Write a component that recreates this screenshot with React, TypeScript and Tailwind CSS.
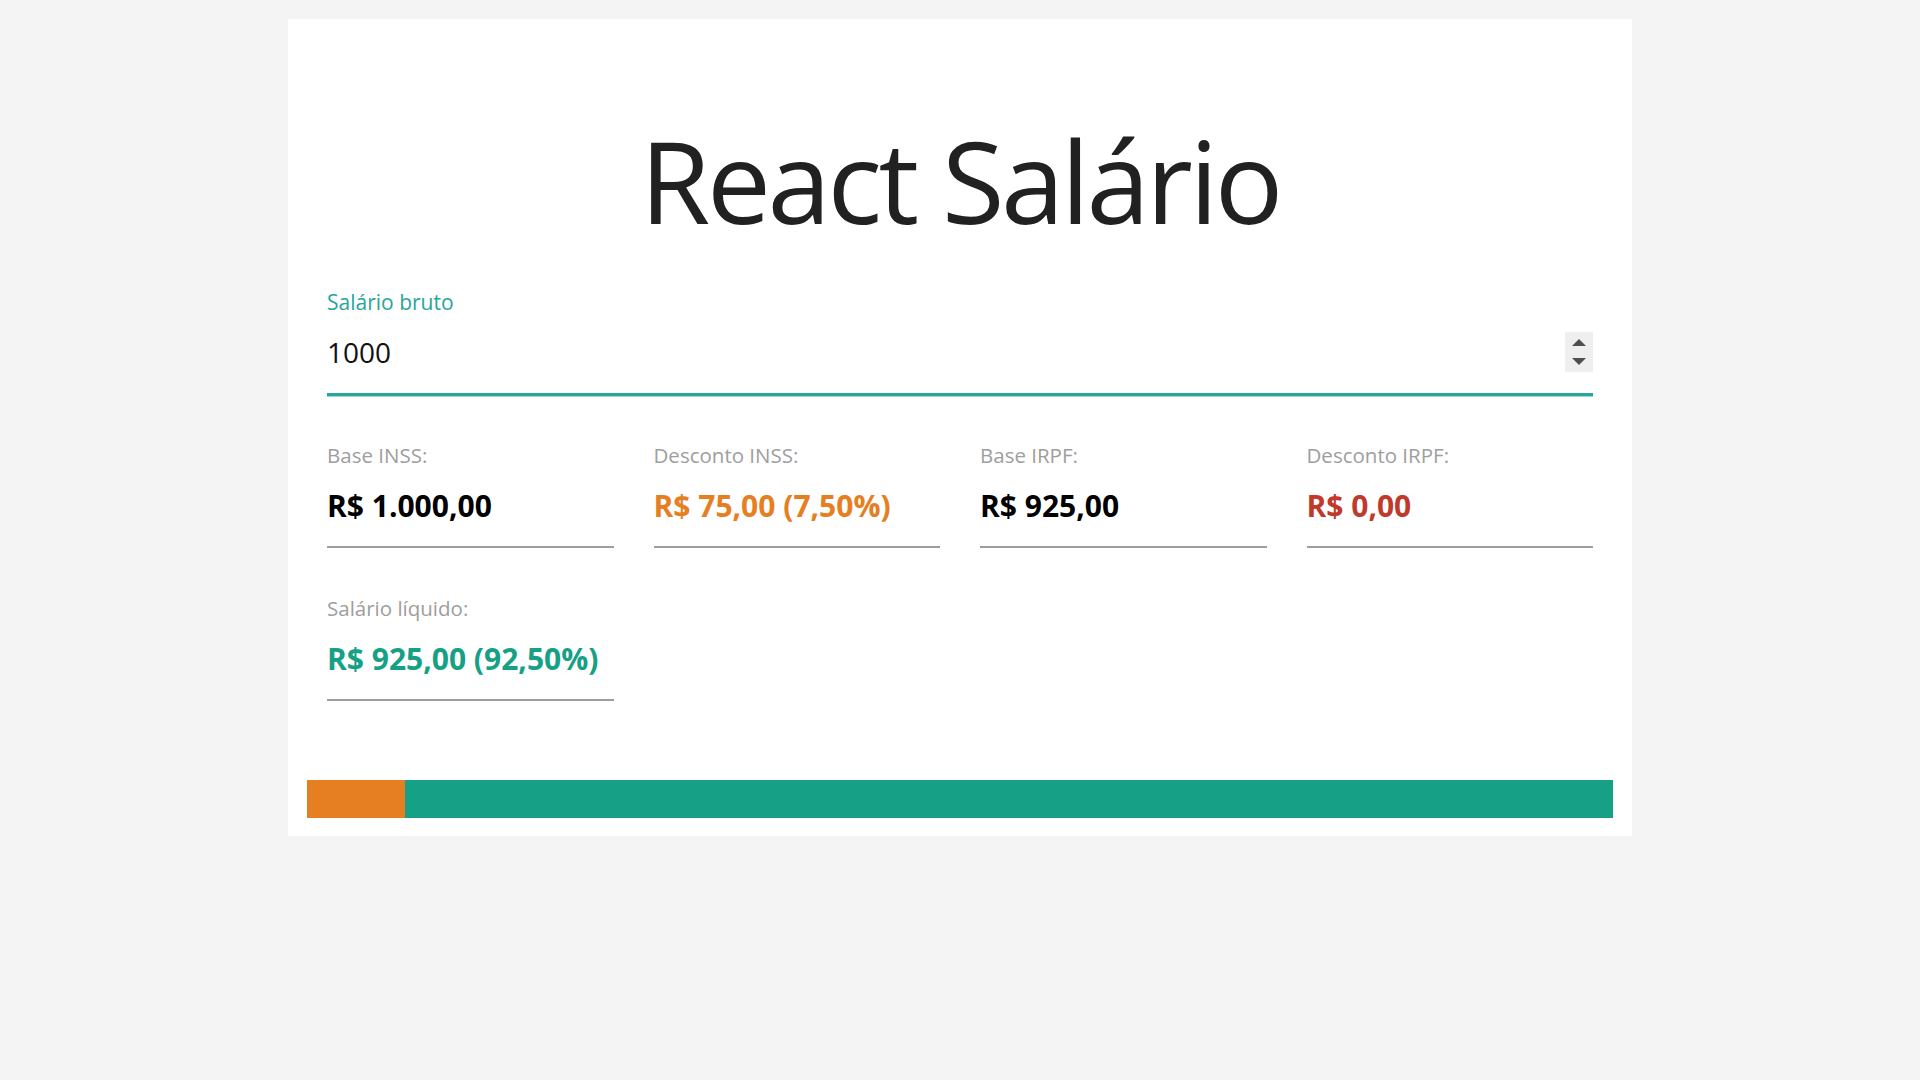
const font = { fontFamily: '"Open Sans", "Noto Sans", sans-serif' };

type FieldProps = {
  label: string;
  value: string;
  color: string;
};

const Field = ({ label, value, color }: FieldProps) => {
  return (
    <div className="flex flex-col border-b-2 border-[#9e9e9e] pb-[22px]">
      <span className="text-[20.5px] leading-[28px] text-[#9e9e9e]">{label}</span>
      <span className={`mt-[19px] text-[30px] leading-[36px] font-bold ${color}`}>{value}</span>
    </div>
  );
};

const Spinner = () => {
  return (
    <div className="flex h-[40px] w-[28px] flex-col items-center justify-between bg-[#efefef] py-[7px]">
      <svg width="14" height="7" viewBox="0 0 14 7">
        <polygon points="7,0 14,7 0,7" fill="#505050" />
      </svg>
      <svg width="14" height="7" viewBox="0 0 14 7">
        <polygon points="0,0 14,0 7,7" fill="#505050" />
      </svg>
    </div>
  );
};

export default function App() {
  const bruto = 1000;
  const inss = 75;
  const pctInss = (inss / bruto) * 100;

  return (
    <div className="min-h-screen bg-[#f4f4f4] pt-[19px]" style={font}>
      <div className="mx-auto flex w-[1344px] flex-col bg-white pt-[96px] pb-[18px]">
        {/* Title */}
        <h1 className="text-center text-[114px] leading-[130px] font-normal tracking-[-0.03em] text-[#212121]">
          React Salário
        </h1>

        {/* Input */}
        <div className="mx-[39px] mt-[43px] flex flex-col">
          <span className="text-[21px] leading-[28px] text-[#26a69a]">Salário bruto</span>
          <div className="mt-[16px] flex items-center justify-between border-b-[3px] border-[#26a69a] pb-[21px] shadow-[0_1px_0_0_rgba(38,166,154,0.45)]">
            <span className="text-[28px] leading-[40px] text-[#111]">1000</span>
            <Spinner />
          </div>
        </div>

        {/* Results */}
        <div className="mx-[39px] mt-[45px] grid grid-cols-4 gap-x-[40px] gap-y-[46px]">
          <Field label="Base INSS:" value="R$ 1.000,00" color="text-black" />
          <Field label="Desconto INSS:" value="R$ 75,00 (7,50%)" color="text-[#e67e22]" />
          <Field label="Base IRPF:" value="R$ 925,00" color="text-black" />
          <Field label="Desconto IRPF:" value="R$ 0,00" color="text-[#c0392b]" />
          <Field label="Salário líquido:" value="R$ 925,00 (92,50%)" color="text-[#16a085]" />
        </div>

        {/* Bar */}
        <div className="mx-[19px] mt-[79px] flex h-[38px]">
          <div className="h-full bg-[#e67e22]" style={{ width: `${pctInss}%` }} />
          <div className="h-full flex-1 bg-[#16a085]" />
        </div>
      </div>
    </div>
  );
}
